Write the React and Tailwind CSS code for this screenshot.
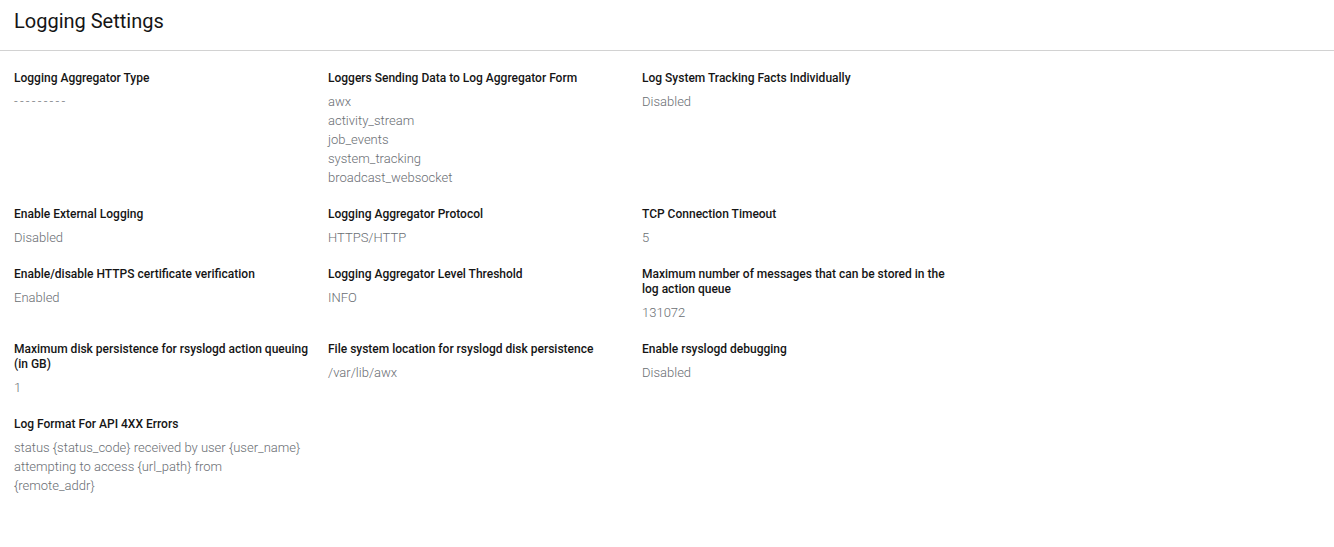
import React from 'react';

const settings = [
  { label: 'Logging Aggregator Type', value: ['---------'], wide: true },
  {
    label: 'Loggers Sending Data to Log Aggregator Form',
    value: ['awx', 'activity_stream', 'job_events', 'system_tracking', 'broadcast_websocket'],
  },
  { label: 'Log System Tracking Facts Individually', value: ['Disabled'] },
  { label: 'Enable External Logging', value: ['Disabled'] },
  { label: 'Logging Aggregator Protocol', value: ['HTTPS/HTTP'] },
  { label: 'TCP Connection Timeout', value: ['5'] },
  { label: 'Enable/disable HTTPS certificate verification', value: ['Enabled'] },
  { label: 'Logging Aggregator Level Threshold', value: ['INFO'] },
  { label: 'Maximum number of messages that can be stored in the log action queue', value: ['131072'] },
  { label: 'Maximum disk persistence for rsyslogd action queuing (in GB)', value: ['1'] },
  { label: 'File system location for rsyslogd disk persistence', value: ['/var/lib/awx'] },
  { label: 'Enable rsyslogd debugging', value: ['Disabled'] },
  {
    label: 'Log Format For API 4XX Errors',
    value: ['status {status_code} received by user {user_name} attempting to access {url_path} from {remote_addr}'],
  },
];

export default function App() {
  return (
    <div className="min-h-screen bg-white font-['Roboto',sans-serif] text-[#151515]">
      <header className="px-[14px] pt-[8px] pb-[16px] border-b border-[#d2d2d2]">
        <h1 className="text-[20px] leading-[26px] font-normal">Logging Settings</h1>
      </header>

      <dl className="grid grid-cols-[repeat(3,304px)] gap-x-[10px] gap-y-5 px-[14px] pt-5">
        {settings.map((s) => (
          <div key={s.label} className="flex flex-col gap-[6px]">
            <dt className="text-[12px] leading-[15px] font-medium">{s.label}</dt>
            <dd
              className={`max-w-[290px] text-[13px] leading-[19px] text-[#6a6e73] font-light ${s.wide ? 'tracking-[2.2px]' : ''}`}
            >
              {s.value.map((v) => (
                <div key={v}>{v}</div>
              ))}
            </dd>
          </div>
        ))}
      </dl>
    </div>
  );
}
